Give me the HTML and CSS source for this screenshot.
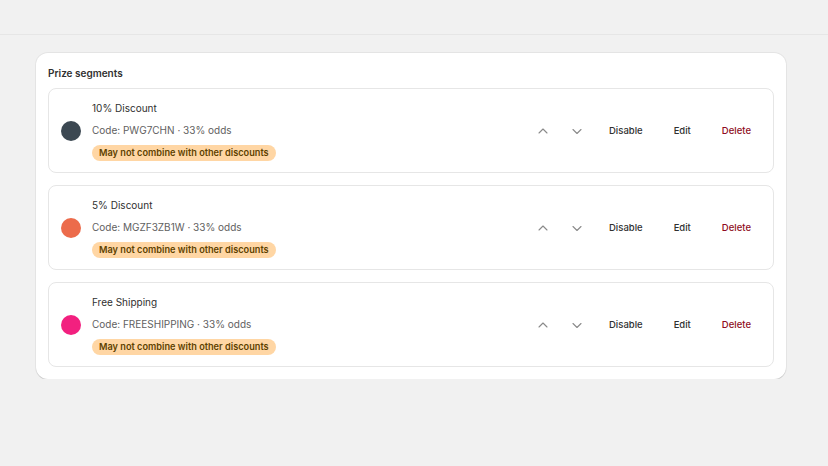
FILE: index.html
```html
<!DOCTYPE html>
<html lang="en">
<head>
  <meta charset="UTF-8" />
  <meta name="viewport" content="width=device-width, initial-scale=1.0"/>
  <title>Prize segments</title>
  <link rel="stylesheet" href="styles.css">
</head>
<body>
  <div class="topbar"></div>

  <div class="page">
    <div class="card">
      <h2>Prize segments</h2>

      <div class="segments">
        <div class="segment">
          <span class="swatch" style="background:#3c4852"></span>
          <div class="segment-info">
            <div class="segment-name">10% Discount</div>
            <div class="segment-meta">Code: PWG7CHN · 33% odds</div>
            <span class="badge">May not combine with other discounts</span>
          </div>
          <div class="actions">
            <button class="icon-btn" aria-label="Move up">
              <svg viewBox="0 0 12 12" width="12" height="12"><path d="M2 8L6 4L10 8"/></svg>
            </button>
            <button class="icon-btn" aria-label="Move down">
              <svg viewBox="0 0 12 12" width="12" height="12"><path d="M2 4.5L6 8.5L10 4.5"/></svg>
            </button>
            <button class="plain-btn">Disable</button>
            <button class="plain-btn">Edit</button>
            <button class="plain-btn danger">Delete</button>
          </div>
        </div>

        <div class="segment">
          <span class="swatch" style="background:#ec6b4b"></span>
          <div class="segment-info">
            <div class="segment-name">5% Discount</div>
            <div class="segment-meta">Code: MGZF3ZB1W · 33% odds</div>
            <span class="badge">May not combine with other discounts</span>
          </div>
          <div class="actions">
            <button class="icon-btn" aria-label="Move up">
              <svg viewBox="0 0 12 12" width="12" height="12"><path d="M2 8L6 4L10 8"/></svg>
            </button>
            <button class="icon-btn" aria-label="Move down">
              <svg viewBox="0 0 12 12" width="12" height="12"><path d="M2 4.5L6 8.5L10 4.5"/></svg>
            </button>
            <button class="plain-btn">Disable</button>
            <button class="plain-btn">Edit</button>
            <button class="plain-btn danger">Delete</button>
          </div>
        </div>

        <div class="segment">
          <span class="swatch" style="background:#f2207f"></span>
          <div class="segment-info">
            <div class="segment-name">Free Shipping</div>
            <div class="segment-meta">Code: FREESHIPPING · 33% odds</div>
            <span class="badge">May not combine with other discounts</span>
          </div>
          <div class="actions">
            <button class="icon-btn" aria-label="Move up">
              <svg viewBox="0 0 12 12" width="12" height="12"><path d="M2 8L6 4L10 8"/></svg>
            </button>
            <button class="icon-btn" aria-label="Move down">
              <svg viewBox="0 0 12 12" width="12" height="12"><path d="M2 4.5L6 8.5L10 4.5"/></svg>
            </button>
            <button class="plain-btn">Disable</button>
            <button class="plain-btn">Edit</button>
            <button class="plain-btn danger">Delete</button>
          </div>
        </div>
      </div>
    </div>
  </div>
</body>
</html>
```

FILE: styles.css
```css
body {
  margin: 0;
  font-family: Inter, "Noto Sans", sans-serif;
  font-size: 10px;
  line-height: 20px;
  color: #303030;
  background: #f1f1f1;
}

.topbar {
  height: 34px;
  border-bottom: 1px solid #e6e6e6;
}

.page {
  padding: 18px 42px 0 36px;
}

.card {
  background: #fff;
  border-radius: 12px;
  padding: 10px 12px 12px;
  box-shadow: 0 1px 0 rgba(0, 0, 0, 0.1), 0 0 0 1px rgba(0, 0, 0, 0.05);
}

.card h2 {
  margin: 0 0 5px;
  font-size: 10px;
  font-weight: 600;
  line-height: 20px;
}

.segments {
  display: flex;
  flex-direction: column;
  gap: 12px;
}

.segment {
  display: flex;
  align-items: center;
  gap: 11px;
  padding: 9px 10px 11px 12px;
  border: 1px solid #e6e6e6;
  border-radius: 8px;
}

.swatch {
  width: 20px;
  height: 20px;
  border-radius: 50%;
  flex-shrink: 0;
  margin-top: 2px;
}

.segment-info {
  flex: 1;
  display: flex;
  flex-direction: column;
  align-items: flex-start;
  gap: 2px;
}

.segment-meta {
  color: #616161;
}

.badge {
  margin-top: 3px;
  padding: 0 7px;
  font-size: 9.2px;
  font-weight: 600;
  line-height: 16px;
  color: #5e4200;
  background: #ffd6a4;
  border-radius: 8px;
}

.actions {
  display: flex;
  align-items: center;
  gap: 6px;
  margin-top: 2px;
}

.icon-btn {
  width: 28px;
  height: 28px;
  display: flex;
  align-items: center;
  justify-content: center;
  padding: 0;
  border: none;
  background: none;
  cursor: pointer;
}

.icon-btn svg {
  fill: none;
  stroke: #8a8a8a;
  stroke-width: 1.1;
  stroke-linecap: round;
  stroke-linejoin: round;
}

.plain-btn {
  padding: 4px 12px;
  border: none;
  background: none;
  font-family: inherit;
  font-size: 9.5px;
  font-weight: 500;
  line-height: 20px;
  color: #303030;
  cursor: pointer;
}

.plain-btn + .plain-btn {
  margin-left: 1px;
}

.plain-btn.danger {
  color: #8e0b21;
}
```
